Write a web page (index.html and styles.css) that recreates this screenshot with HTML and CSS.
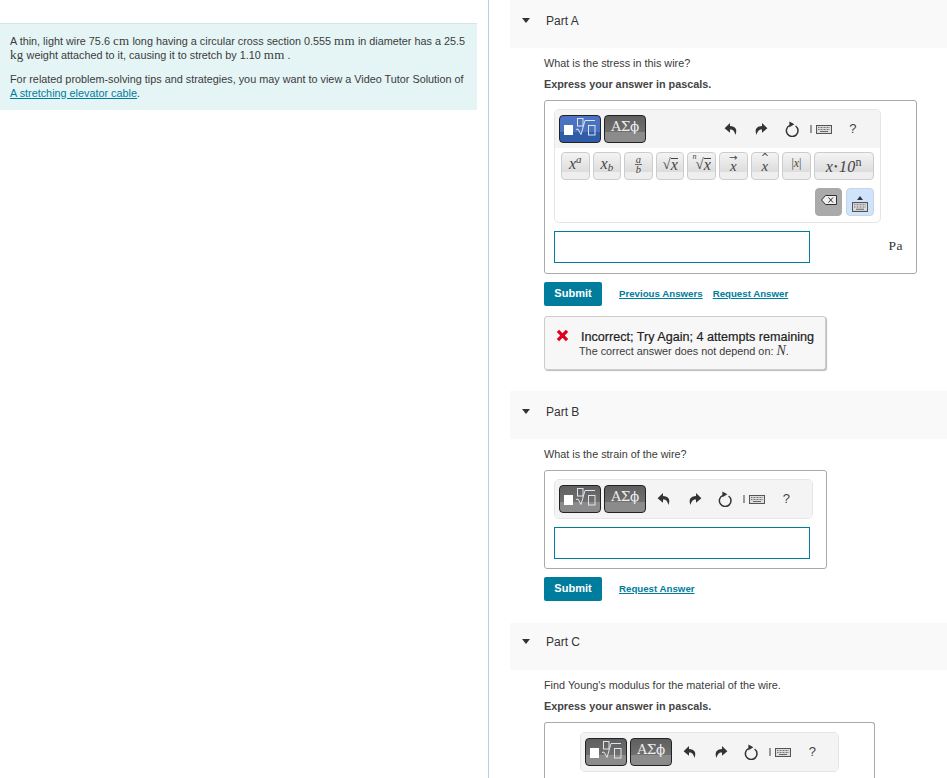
FILE: index.html
```html
<!DOCTYPE html>
<html lang="en">
<head>
<meta charset="utf-8">
<title>Stretching wire</title>
<link rel="stylesheet" href="styles.css">
</head>
<body>
<svg class="defs" width="0" height="0" aria-hidden="true">
  <symbol id="i-undo" viewBox="0 0 14 14"><path d="M6 1 .6 6.2 6 10.8V7.6C8.8 7.4 10.4 8.8 11.4 13 13.8 7.6 11.4 4.2 6 4Z" fill="#333"/></symbol>
  <symbol id="i-redo" viewBox="0 0 14 14"><path d="M8 1 13.4 6.2 8 10.8V7.6C5.2 7.4 3.6 8.8 2.6 13 .2 7.6 2.6 4.2 8 4Z" fill="#333"/></symbol>
  <symbol id="i-reset" viewBox="0 0 16 16"><path d="M5.8 4.4A5.8 5.8 0 1 0 11.6 5" fill="none" stroke="#333" stroke-width="1.5"/><path d="M5.4 .4 10.4 3.2 5.4 6.2Z" fill="#333"/></symbol>
  <symbol id="i-kbd" viewBox="0 0 16 9" preserveAspectRatio="none"><rect x="0.5" y="0.5" width="15" height="8" fill="#ddd" stroke="#555"/><path d="M2 2.5h12M2 4.5h12" stroke="#777" stroke-dasharray="1 .5"/><path d="M4 6.5h8" stroke="#666"/></symbol>
  <symbol id="i-tpl" viewBox="0 0 32 18"><rect x="0" y="7" width="9" height="10" fill="#fff"/><g fill="none" stroke="#dfe4ec" stroke-width="1"><rect x="13.5" y="0.5" width="5.5" height="7.5"/><rect x="24.5" y="7.5" width="6.5" height="9.5"/><path d="M12 11.5 14 11 17 16.5 21 2.5H31"/></g></symbol>
</svg>

<aside class="intro-col">
  <div class="intro">
    <p>A thin, light wire 75.6 <span class="m">cm</span> long having a circular cross section 0.555 <span class="m">mm</span> in diameter has a 25.5 <span class="m">kg</span> weight attached to it, causing it to stretch by 1.10 <span class="m">mm</span> .</p>
    <p>For related problem-solving tips and strategies, you may want to view a Video Tutor Solution of <a href="#">A stretching elevator cable</a>.</p>
  </div>
</aside>

<main class="parts">
  <section class="part">
    <h2 class="head"><span class="tri"></span>Part A</h2>
    <div class="body">
      <p class="q">What is the stress in this wire?</p>
      <p class="hint">Express your answer in pascals.</p>
      <div class="answer answer--a">
        <div class="toolbar toolbar--full">
          <div class="top">
            <span class="tbtn tbtn--on"><svg class="tpl"><use href="#i-tpl"/></svg></span>
            <span class="tbtn">ΑΣϕ</span>
            <div class="tools">
              <span class="tool"><svg class="ic14"><use href="#i-undo"/></svg></span>
              <span class="tool"><svg class="ic14"><use href="#i-redo"/></svg></span>
              <span class="tool"><svg class="ic16"><use href="#i-reset"/></svg></span>
              <span class="tool tool--kbd"><span class="brk"></span><svg class="kbd"><use href="#i-kbd"/></svg></span>
              <span class="tool help">?</span>
            </div>
          </div>
          <div class="mrow">
            <span class="mb"><i>x</i><sup>a</sup></span>
            <span class="mb"><i>x</i><sub>b</sub></span>
            <span class="mb"><span class="frac"><i>a</i><i>b</i></span></span>
            <span class="mb"><span class="rad">√</span><i class="over">x</i></span>
            <span class="mb"><sup class="idx">n</sup><span class="rad">√</span><i class="over">x</i></span>
            <span class="mb"><span class="acc"><span>→</span><i>x</i></span></span>
            <span class="mb"><span class="acc"><span>^</span><i>x</i></span></span>
            <span class="mb mb--abs">|<i>x</i>|</span>
            <span class="mb mb--wide"><i>x</i><span class="dot">•</span><i>10</i><sup>n</sup></span>
          </div>
          <div class="mrow mrow--end">
            <span class="mb mb--del"><svg class="del" viewBox="0 0 16 10"><path d="M4.5.5H15.5V9.5H4.5L.5 5Z" fill="#eee" stroke="#333"/><path d="M7.5 2.5 12 7.5M12 2.5 7.5 7.5" stroke="#333"/></svg></span>
            <span class="mb mb--kb"><span class="up"></span><svg class="kbd kbd--big"><use href="#i-kbd"/></svg></span>
          </div>
        </div>
        <div class="entry"><div class="input"></div><span class="unit">Pa</span></div>
      </div>
      <div class="actions">
        <button class="submit" type="button">Submit</button>
        <a href="#">Previous Answers</a>
        <a href="#">Request Answer</a>
      </div>
      <div class="feedback">
        <div class="fb-title"><svg class="cross" viewBox="0 0 12 12"><path d="M1.8 1.8 10.2 10.2M10.2 1.8 1.8 10.2" stroke="#e0001b" stroke-width="3"/></svg><strong>Incorrect; Try Again; 4 attempts remaining</strong></div>
        <p>The correct answer does not depend on: <i class="n">N</i>.</p>
      </div>
    </div>
  </section>

  <section class="part">
    <h2 class="head"><span class="tri"></span>Part B</h2>
    <div class="body">
      <p class="q q--last">What is the strain of the wire?</p>
      <div class="answer answer--b">
        <div class="toolbar">
          <div class="top">
            <span class="tbtn"><svg class="tpl"><use href="#i-tpl"/></svg></span>
            <span class="tbtn">ΑΣϕ</span>
            <div class="tools">
              <span class="tool"><svg class="ic14"><use href="#i-undo"/></svg></span>
              <span class="tool"><svg class="ic14"><use href="#i-redo"/></svg></span>
              <span class="tool"><svg class="ic16"><use href="#i-reset"/></svg></span>
              <span class="tool tool--kbd"><span class="brk"></span><svg class="kbd"><use href="#i-kbd"/></svg></span>
              <span class="tool help">?</span>
            </div>
          </div>
        </div>
        <div class="entry"><div class="input"></div></div>
      </div>
      <div class="actions">
        <button class="submit" type="button">Submit</button>
        <a href="#">Request Answer</a>
      </div>
    </div>
  </section>

  <section class="part part--c">
    <h2 class="head"><span class="tri"></span>Part C</h2>
    <div class="body">
      <p class="q">Find Young's modulus for the material of the wire.</p>
      <p class="hint">Express your answer in pascals.</p>
      <div class="answer answer--c">
        <div class="toolbar toolbar--center">
          <div class="top">
            <span class="tbtn"><svg class="tpl"><use href="#i-tpl"/></svg></span>
            <span class="tbtn">ΑΣϕ</span>
            <div class="tools">
              <span class="tool"><svg class="ic14"><use href="#i-undo"/></svg></span>
              <span class="tool"><svg class="ic14"><use href="#i-redo"/></svg></span>
              <span class="tool"><svg class="ic16"><use href="#i-reset"/></svg></span>
              <span class="tool tool--kbd"><span class="brk"></span><svg class="kbd"><use href="#i-kbd"/></svg></span>
              <span class="tool help">?</span>
            </div>
          </div>
        </div>
      </div>
    </div>
  </section>
</main>
</body>
</html>
```
FILE: styles.css
```css
* { box-sizing: border-box; }
html, body { height: 778px; overflow: hidden; }
body {
  margin: 0;
  display: flex;
  background: #fff;
  color: #3b3b3b;
  font: 10.83px/14px "Liberation Sans", Arial, sans-serif;
}
.defs { position: absolute; }
p { margin: 0; }
a { color: #007c9d; }

.intro-col {
  width: 489px;
  flex: none;
  height: 778px;
  padding: 23px 11px 0 0;
  border-right: 1px solid #b9cfe0;
}
.intro {
  background: #e5f5f6;
  border-top: 1px solid #d5e5e6;
  height: 87px;
  padding: 10px 10px 0;
  line-height: 13px;
}
.intro p + p { margin-top: 11px; line-height: 13.5px; }
.m { font-family: "Liberation Serif", serif; font-size: 13px; letter-spacing: .3px; }

.parts { flex: 1; padding-left: 21px; min-width: 0; }
.head {
  margin: 0;
  height: 48px;
  background: #f9f9f9;
  padding: 14px 0 0 12px;
  display: flex;
  align-items: flex-start;
  font-size: 12px;
  font-weight: 400;
  line-height: 15px;
  color: #333;
}
.part--c .head { height: 47px; padding-top: 12px; }
.tri {
  width: 0;
  height: 0;
  margin: 4px 16px 0 0;
  border: 4px solid transparent;
  border-top: 5px solid #333;
  border-bottom: 0;
}
.body { padding: 8px 0 21px 34px; }
.part + .part .body { padding-bottom: 22px; }
.part--c .body { padding-bottom: 0; }
.q { margin-bottom: 7px; }
.q--last { margin-bottom: 9px; }
.hint { margin-bottom: 9px; font-weight: 700; color: #444; }

.answer {
  border: 1px solid #aaa;
  border-radius: 3px;
  padding: 8px 0 9px 9px;
}
.answer--a { width: 373px; padding-bottom: 10px; }
.answer--b { width: 283px; }
.answer--c { width: 331px; height: 57px; border-bottom: 0; border-radius: 3px 3px 0 0; padding-bottom: 0; }

.toolbar {
  width: 259px;
  border: 1px solid #e5e5e5;
  border-radius: 5px;
  background: #fff;
  overflow: hidden;
}
.toolbar--full { width: 327px; height: 114px; }
.toolbar--center { margin-left: 26px; margin-top: 1px; }
.top {
  height: 38px;
  background: #f4f4f4;
  display: flex;
  align-items: center;
  gap: 3px;
  padding-left: 4px;
}
.tbtn {
  width: 42px;
  height: 28px;
  flex: none;
  border: 1px solid #222;
  border-radius: 4px;
  background: linear-gradient(#5f5f5f, #707070 62%, #8b8b8b 63%);
  color: #eee;
  font: 13.5px/18px "DejaVu Serif", "Liberation Serif", serif;
  display: flex;
  justify-content: center;
  padding-top: 1px;
  letter-spacing: -.3px;
}
.tbtn--on { background: linear-gradient(#4a74c4, #4a70bd 62%, #2f5ca8 63%); }
.tpl { width: 32px; height: 18px; margin-top: 1px; }
.tools { margin-left: auto; margin-right: 12px; display: flex; }
.tool {
  width: 30.5px;
  display: flex;
  justify-content: center;
  align-items: center;
}
.tool--kbd { padding-right: 3px; gap: 4px; }
.ic14 { width: 14px; height: 14px; }
.ic16 { width: 16px; height: 16px; }
.brk { width: 2px; height: 8px; background: #999; }
.kbd { width: 16px; height: 9px; }
.help { font-size: 13px; color: #444; }

.mrow {
  display: flex;
  gap: 3px;
  padding: 4px 6px 0;
}
.mrow--end { justify-content: flex-end; gap: 4px; padding-top: 8px; }
.mb {
  width: 28.6px;
  height: 28px;
  flex: none;
  display: flex;
  justify-content: center;
  padding-top: 3px;
  border: 1px solid #ccc;
  border-radius: 4px;
  background: linear-gradient(#f4f4f4, #dcdcdc 74%, #eee 75%);
  font: 16px/16px "Liberation Serif", serif;
  color: #444;
}
.mb sup, .mb sub { font-size: 11px; line-height: 0; font-style: italic; }
.mb sup { position: relative; top: 3px; }
.mb sub { position: relative; top: 11px; }
.frac { display: flex; flex-direction: column; align-items: center; font-size: 10.5px; line-height: 9px; margin-top: -1px; }
.frac i:first-child { border-bottom: 1px solid #666; padding: 0 1px; }
.rad { font-size: 15px; }
.over { border-top: 1px solid #444; line-height: 12px; height: 13px; margin-top: 2px; }
.mb .idx { font-size: 8px; top: 1px; margin-right: -1px; }
.acc { display: flex; flex-direction: column; align-items: center; font-size: 15px; line-height: 10px; margin-top: -2px; }
.acc span { font: 10px/7px "DejaVu Sans", sans-serif; height: 7px; }
.mb--abs { font-size: 12px; padding-top: 2px; }
.mb--wide { width: 60px; font-size: 16px; font-weight: 400; padding-top: 6px; letter-spacing: .3px; }
.mb--wide sup { top: 3px; font-size: 12px; font-style: normal; }
.dot { font-size: 10px; margin: 0 1px; }
.mb--del { background: #aaa; border-color: #aaa; padding-top: 6px; width: 27px; }
.del { width: 16px; height: 10px; }
.mb--kb { background: #cfe4fb; border-color: #c5d5e5; flex-direction: column; align-items: center; padding-top: 4px; width: 28px; }
.up { width: 0; height: 0; border: 3.5px solid transparent; border-bottom: 4px solid #333; border-top: 0; margin-bottom: 2px; }
.kbd--big { width: 16px; height: 10px; }

.entry { display: flex; margin-top: 8px; padding-right: 13px; }
.input { width: 256px; height: 32px; border: 1px solid #007c9d; background: #fff; }
.unit { margin: 8px 0 0 auto; font: 13.5px/14px "Liberation Serif", serif; letter-spacing: .5px; color: #333; }

.actions { display: flex; align-items: center; margin-top: 8px; font-size: 9.7px; font-weight: 700; gap: 10px; }
.submit {
  width: 58px;
  height: 24px;
  margin-right: 7px;
  border: 0;
  border-radius: 2px;
  background: #007c9d;
  color: #fff;
  font: 700 11px "Liberation Sans", Arial, sans-serif;
  padding: 0 0 3px;
}
.feedback {
  width: 282px;
  height: 54px;
  margin-top: 10px;
  padding: 13px 0 0 11px;
  background: #f7f7f7;
  border: 1px solid #ccc;
  border-radius: 3px;
  box-shadow: 1px 1px 1px #bbb;
}
.fb-title { display: flex; align-items: center; height: 14px; }
.fb-title strong { font-weight: 400; font-size: 12.6px; color: #222; -webkit-text-stroke: .2px #222; }
.cross { width: 13px; height: 13px; margin: -3px 12px 0 0; }
.feedback p { margin: -1px 0 0 23px; line-height: 14px; }
.n { font: italic 14px "Liberation Serif", serif; }
```
